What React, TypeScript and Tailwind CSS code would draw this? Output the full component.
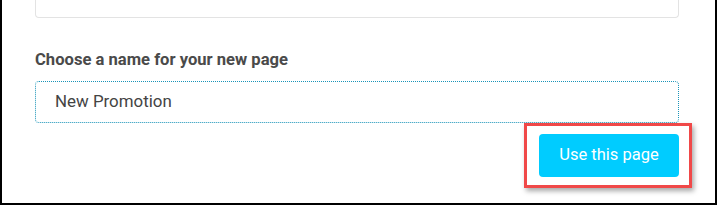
export default function App() {
  return (
    <div
      className="relative w-[717px] h-[205px] bg-white border-x-2 border-b-2 border-black overflow-hidden"
      style={{ fontFamily: 'Roboto, "Liberation Sans", sans-serif' }}
    >
      <div className="pl-[33px] pr-[36px] flex flex-col">
        <div className="h-[18px] border border-t-0 border-[#e3e3e3] rounded-b-[4px]" />
        <div className="mt-[32px] text-[16.6px] leading-[20px] font-bold text-[#4a4a4a]">
          Choose a name for your new page
        </div>
        <div className="mt-[11px] h-[42px] border border-dotted border-[#1a94b8] rounded-[4px] flex items-center pl-[19px] text-[16.9px] text-[#444]">
          New Promotion
        </div>
        <div className="mt-[11px] flex justify-end">
          <div className="relative">
            <span className="absolute -left-[15px] -right-[13px] -top-[11px] -bottom-[11px] border-[3px] border-[#f04848] shadow-[2px_3px_5px_rgba(0,0,0,0.35)]" />
            <button className="relative w-[140px] h-[43px] rounded-[4px] bg-[#00ccff] text-white text-[16.5px]">
              Use this page
            </button>
          </div>
        </div>
      </div>
    </div>
  );
}
